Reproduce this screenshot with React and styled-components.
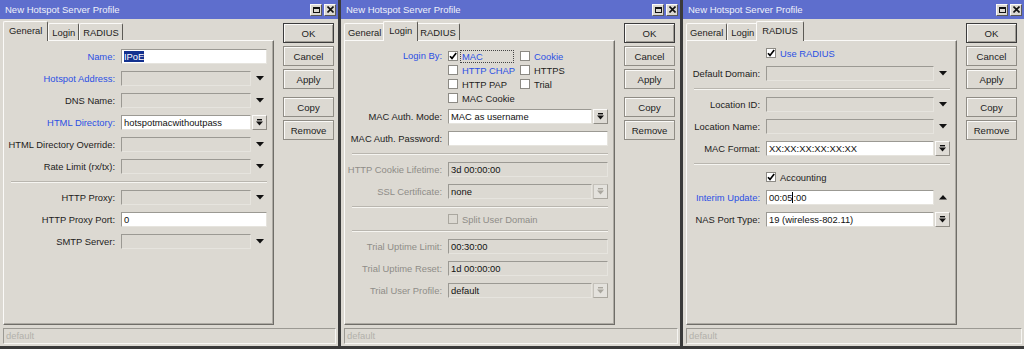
import React from 'react';
import styled, { createGlobalStyle } from 'styled-components';

const C = {
  face: '#dcd9d2',
  light: '#fbfaf8',
  shadow: '#8f8c85',
  dark: '#5c5a55',
  frame: '#3a3a3a',
  title: '#5e6ecd',
  blue: '#2b50e4',
  text: '#1c1c1c',
  muted: '#8f8d88',
};

const GlobalStyle = createGlobalStyle`
  html, body {
    margin: 0;
    padding: 0;
    background: ${C.frame};
  }
  body {
    font-family: "Liberation Sans", Arial, sans-serif;
    font-size: 9.4px;
    color: ${C.text};
  }
`;

const Screen = styled.div`
  display: flex;
  width: 1024px;
  height: 349px;
  overflow: hidden;
`;

const Window = styled.div`
  width: ${p => p.$w}px;
  height: 349px;
  box-sizing: border-box;
  flex-shrink: 0;
  background: ${C.face};
  border-bottom: 3px solid ${C.frame};
  border-right: ${p => (p.$edge ? 3 : 0)}px solid ${C.frame};
  display: flex;
  flex-direction: column;
`;

const TitleBar = styled.div`
  height: 19px;
  flex-shrink: 0;
  background: ${C.title};
  color: #eef0fa;
  font-size: 9.5px;
  display: flex;
  align-items: center;
  justify-content: space-between;
  padding: 0 2px 0 5px;
`;

const WinButtons = styled.div`
  display: flex;
  gap: 2px;
`;

const WinButton = styled.div`
  width: 12px;
  height: 12px;
  box-sizing: border-box;
  background: ${C.face};
  border: 1px solid;
  border-color: ${C.light} ${C.dark} ${C.dark} ${C.light};
  display: flex;
  align-items: center;
  justify-content: center;
`;

const MaxGlyph = styled.span`
  width: 7px;
  height: 6px;
  box-sizing: border-box;
  border: 1px solid #111;
  border-top-width: 2px;
`;

const Main = styled.div`
  display: flex;
  flex: 1;
`;

const TabArea = styled.div`
  margin-left: 3px;
  width: 271px;
  padding-top: 2px;
  display: flex;
  flex-direction: column;
`;

const TabStrip = styled.div`
  display: flex;
  align-items: flex-end;
  height: 19px;
`;

const Tab = styled.div`
  position: relative;
  z-index: ${p => (p.$active ? 2 : 1)};
  height: ${p => (p.$active ? 20 : 17)}px;
  box-sizing: border-box;
  padding: 0 ${p => (p.$active ? 5 : 3)}px;
  margin: 0 ${p => (p.$active && !p.$first ? -2 : 0)}px ${p => (p.$active ? -1 : 0)}px
    ${p => (p.$active && !p.$first ? -2 : 0)}px;
  background: ${C.face};
  border: 1px solid;
  border-bottom: none;
  border-color: ${C.light} ${C.dark} ${C.dark} ${C.light};
  border-radius: 2px 2px 0 0;
  display: flex;
  align-items: center;
  padding-bottom: ${p => (p.$active ? 2 : 0)}px;
`;

const Panel = styled.div`
  height: 285px;
  box-sizing: border-box;
  border: 1px solid;
  border-color: ${C.light} #6f6d68 #6f6d68 ${C.light};
  box-shadow: inset -1px -1px 0 #aeaba4;
  display: flex;
  flex-direction: column;
  padding-right: 6px;
`;

const ButtonColumn = styled.div`
  margin-left: 9px;
  width: 51px;
  padding-top: 4px;
  display: flex;
  flex-direction: column;
  gap: 3px;
`;

const Button = styled.button`
  height: 20px;
  box-sizing: border-box;
  margin: ${p => (p.$gap ? 5 : 0)}px 0 0;
  padding: 0;
  font-family: inherit;
  font-size: 9.6px;
  color: #222;
  background: ${C.face};
  border: 1px solid ${p => (p.$default ? '#3c3c3c' : C.shadow)};
  box-shadow: inset 1px 1px 0 ${C.light}
    ${p => (p.$default ? `, inset -1px -1px 0 #a19e97` : '')};
`;

const StatusBar = styled.div`
  margin: 3px 2px 2px 3px;
  height: 16px;
  box-sizing: border-box;
  border: 1px solid;
  border-color: #9b9993 #f6f5f2 #f6f5f2 #9b9993;
  color: #b3b1ab;
  padding-left: 2px;
  line-height: 14px;
`;

const Row = styled.div`
  display: flex;
  align-items: ${p => (p.$top ? 'flex-start' : 'center')};
  min-height: ${p => (p.$tall ? 14 : 15)}px;
  margin-top: ${p => p.$mt ?? 7}px;
`;

const TONES = { normal: C.text, blue: C.blue, off: C.muted };

const Label = styled.div`
  width: ${p => p.$w}px;
  flex-shrink: 0;
  margin-right: 6px;
  text-align: right;
  white-space: nowrap;
  line-height: ${p => (p.$top ? 14 : 15)}px;
  color: ${p => TONES[p.$tone || 'normal']};
`;

const Input = styled.div`
  flex: 1;
  height: 15px;
  box-sizing: border-box;
  background: ${p => (p.$fill === 'white' ? '#fff' : C.face)};
  border: 1px solid;
  border-color: #9b9993 #e6e4de #e6e4de #9b9993;
  padding: 0 2px;
  line-height: 13px;
  white-space: nowrap;
  overflow: hidden;
  color: #111;
`;

const Selected = styled.span`
  background: #13318f;
  color: #fff;
`;

const Caret = styled.span`
  display: inline-block;
  width: 1px;
  height: 11px;
  background: #000;
  vertical-align: -2px;
`;

const SuffixSlot = styled.div`
  width: 15px;
  height: 15px;
  margin-left: 1px;
  flex-shrink: 0;
  display: flex;
  align-items: center;
  justify-content: center;
`;

const ComboButton = styled.div`
  width: 15px;
  height: 15px;
  box-sizing: border-box;
  background: ${p => (p.$off ? '#e4e2dd' : '#dedbd5')};
  border: 1px solid;
  border-color: ${p =>
    p.$off ? '#c4c1ba #aaa79f #aaa79f #c4c1ba' : `${C.light} ${C.shadow} ${C.shadow} ${C.light}`};
  display: flex;
  align-items: center;
  justify-content: center;
`;

const Separator = styled.div`
  height: 2px;
  box-sizing: border-box;
  margin: ${p => p.$mt ?? 7}px 0 0 7px;
  border-top: 1px solid #b9b6af;
  border-bottom: 1px solid #f6f5f1;
`;

const CheckGrid = styled.div`
  display: grid;
  grid-template-columns: 72px 72px;
  grid-auto-rows: 14px;
`;

const CheckItem = styled.div`
  display: flex;
  align-items: center;
  height: 14px;
`;

const CheckBox = styled.div`
  width: 10px;
  height: 10px;
  box-sizing: border-box;
  flex-shrink: 0;
  background: ${p => (p.$off ? C.face : '#fff')};
  border: 1px solid ${p => (p.$off ? '#aaa79f' : '#8c8a84')};
  display: flex;
  align-items: center;
  justify-content: center;
`;

const CheckText = styled.span`
  flex: ${p => (p.$focus ? 1 : 'none')};
  margin: 0 ${p => (p.$focus ? 6 : 0)}px 0 2px;
  padding-left: 1px;
  border: 1px dotted ${p => (p.$focus ? '#444' : 'transparent')};
  line-height: 11px;
  white-space: nowrap;
  color: ${p => TONES[p.$tone || 'normal']};
`;

const Tick = () => (
  <svg width="8" height="8" viewBox="0 0 8 8">
    <path d="M1 4.2 L3 6.4 L7.2 1" fill="none" stroke="#000" strokeWidth="1.7" />
  </svg>
);

const Close = () => (
  <svg width="7" height="7" viewBox="0 0 7 7">
    <path d="M0.5 0.5 L6.5 6.5 M6.5 0.5 L0.5 6.5" stroke="#111" strokeWidth="1.6" />
  </svg>
);

const Suffix = ({ kind }) => {
  if (kind === 'down' || kind === 'up') {
    return (
      <SuffixSlot>
        <svg width="8" height="5" viewBox="0 0 8 5">
          <path d={kind === 'down' ? 'M0 0 H8 L4 4.5 Z' : 'M0 4.5 H8 L4 0 Z'} fill="#111" />
        </svg>
      </SuffixSlot>
    );
  }
  const off = kind === 'comboOff';
  const ink = off ? '#aaa79f' : '#111';
  return (
    <SuffixSlot>
      <ComboButton $off={off}>
        <svg width="7" height="7" viewBox="0 0 7 7">
          <rect x="1" y="0" width="5" height="1.4" fill={ink} />
          <path d="M0 2.6 H7 L3.5 6.6 Z" fill={ink} />
        </svg>
      </ComboButton>
    </SuffixSlot>
  );
};

const Field = ({ label, tone, lw, fill, suffix, mt, children }) => (
  <Row $mt={mt}>
    <Label $w={lw} $tone={tone}>{label}</Label>
    <Input $fill={fill}>{children}</Input>
    {suffix && <Suffix kind={suffix} />}
  </Row>
);

const Check = ({ text, checked, tone, focus, off }) => (
  <CheckItem>
    <CheckBox $off={off}>{checked && <Tick />}</CheckBox>
    <CheckText $focus={focus} $tone={off ? 'off' : tone}>{text}</CheckText>
  </CheckItem>
);

const CheckRow = ({ lw, mt, ...rest }) => (
  <Row $mt={mt} $tall>
    <Label $w={lw} />
    <Check {...rest} />
  </Row>
);

const TABS = ['General', 'Login', 'RADIUS'];

const ProfileWindow = ({ w, edge, active, children }) => (
  <Window $w={w} $edge={edge}>
    <TitleBar>
      <span>New Hotspot Server Profile</span>
      <WinButtons>
        <WinButton><MaxGlyph /></WinButton>
        <WinButton><Close /></WinButton>
      </WinButtons>
    </TitleBar>
    <Main>
      <TabArea>
        <TabStrip>
          {TABS.map((t, i) => (
            <Tab key={t} $active={t === active} $first={i === 0}>{t}</Tab>
          ))}
        </TabStrip>
        <Panel>{children}</Panel>
      </TabArea>
      <ButtonColumn>
        <Button $default>OK</Button>
        <Button>Cancel</Button>
        <Button>Apply</Button>
        <Button $gap>Copy</Button>
        <Button>Remove</Button>
      </ButtonColumn>
    </Main>
    <StatusBar>default</StatusBar>
  </Window>
);

const GeneralTab = () => {
  const lw = 111;
  return (
    <>
      <Field lw={lw} label="Name:" tone="blue" fill="white" mt={8}>
        <Selected>IPoE</Selected>
      </Field>
      <Field lw={lw} label="Hotspot Address:" tone="blue" suffix="down" />
      <Field lw={lw} label="DNS Name:" suffix="down" />
      <Field lw={lw} label="HTML Directory:" tone="blue" fill="white" suffix="combo">
        hotspotmacwithoutpass
      </Field>
      <Field lw={lw} label="HTML Directory Override:" suffix="down" />
      <Field lw={lw} label="Rate Limit (rx/tx):" suffix="down" />
      <Separator />
      <Field lw={lw} label="HTTP Proxy:" suffix="down" />
      <Field lw={lw} label="HTTP Proxy Port:" fill="white">0</Field>
      <Field lw={lw} label="SMTP Server:" suffix="down" />
    </>
  );
};

const LoginTab = () => {
  const lw = 97;
  return (
    <>
      <Row $mt={8} $top>
        <Label $w={lw} $tone="blue" $top>Login By:</Label>
        <CheckGrid>
          <Check text="MAC" checked tone="blue" focus />
          <Check text="Cookie" tone="blue" />
          <Check text="HTTP CHAP" tone="blue" />
          <Check text="HTTPS" />
          <Check text="HTTP PAP" />
          <Check text="Trial" />
          <Check text="MAC Cookie" />
        </CheckGrid>
      </Row>
      <Field lw={lw} label="MAC Auth. Mode:" fill="white" suffix="combo" mt={4}>
        MAC as username
      </Field>
      <Field lw={lw} label="MAC Auth. Password:" fill="white" />
      <Separator />
      <Field lw={lw} label="HTTP Cookie Lifetime:" tone="off">3d 00:00:00</Field>
      <Field lw={lw} label="SSL Certificate:" tone="off" suffix="comboOff">none</Field>
      <Separator />
      <CheckRow lw={lw} mt={4} text="Split User Domain" off />
      <Separator $mt={4} />
      <Field lw={lw} label="Trial Uptime Limit:" tone="off">00:30:00</Field>
      <Field lw={lw} label="Trial Uptime Reset:" tone="off">1d 00:00:00</Field>
      <Field lw={lw} label="Trial User Profile:" tone="off" suffix="comboOff">default</Field>
    </>
  );
};

const RadiusTab = () => {
  const lw = 73;
  return (
    <>
      <CheckRow lw={lw} mt={5} text="Use RADIUS" checked tone="blue" />
      <Field lw={lw} label="Default Domain:" suffix="down" mt={6} />
      <Separator />
      <Field lw={lw} label="Location ID:" suffix="down" />
      <Field lw={lw} label="Location Name:" suffix="down" />
      <Field lw={lw} label="MAC Format:" fill="white" suffix="combo">XX:XX:XX:XX:XX:XX</Field>
      <Separator />
      <CheckRow lw={lw} mt={5} text="Accounting" checked />
      <Field lw={lw} label="Interim Update:" tone="blue" fill="white" suffix="up" mt={6}>
        00:05<Caret />:00
      </Field>
      <Field lw={lw} label="NAS Port Type:" fill="white" suffix="combo">19 (wireless-802.11)</Field>
    </>
  );
};

const App = () => (
  <>
    <GlobalStyle />
    <Screen>
      <ProfileWindow w={341} edge active="General">
        <GeneralTab />
      </ProfileWindow>
      <ProfileWindow w={342} edge active="Login">
        <LoginTab />
      </ProfileWindow>
      <ProfileWindow w={341} active="RADIUS">
        <RadiusTab />
      </ProfileWindow>
    </Screen>
  </>
);

export default App;
